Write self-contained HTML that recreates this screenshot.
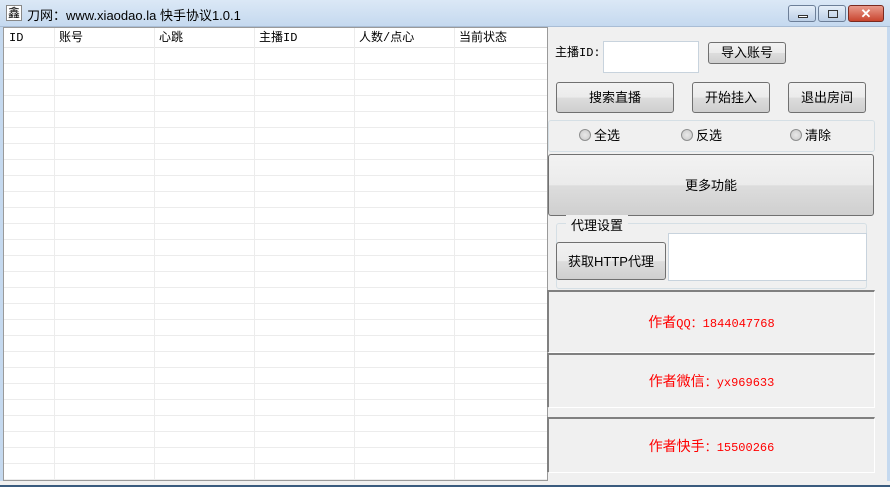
<!DOCTYPE html>
<html><head><meta charset="utf-8"><style>
*{margin:0;padding:0;box-sizing:border-box}
body{width:890px;height:487px;overflow:hidden;background:#f0f0f0;font-family:"Liberation Sans","Noto Sans CJK SC",sans-serif;font-size:12px;color:#000;position:relative}
.a{position:absolute}
#title{left:0;top:0;width:890px;height:27px;background:linear-gradient(#dbe8f6,#c5d9ef);border-bottom:1px solid #a9bdd5}
#frame{left:0;top:27px;width:890px;height:460px;border-left:3px solid #c5d9ef;border-right:3px solid #c5d9ef}
.btn{position:absolute;border:1px solid #707070;border-radius:3px;background:linear-gradient(#f2f2f2 0%,#ebebeb 50%,#dddddd 51%,#cfcfcf 100%);text-align:center;font-size:13px}
.tb{position:absolute;background:#fff;border:1px solid #c8d3dd}
.grp{position:absolute;border:1px solid #d5dfe5;border-radius:3px}
.pan{position:absolute;border-top:2px solid #808080;border-left:2px solid #808080;border-right:1px solid #fff;border-bottom:1px solid #fff;background:#f0f0f0;color:#f00;text-align:center;font-family:"Liberation Mono","Noto Sans CJK SC",monospace;font-size:12px}
.pan b{font-weight:normal;font-family:"Noto Sans CJK SC",sans-serif;font-size:14px}
.rad{position:absolute;font-size:13px}
.rad i{display:inline-block;width:12px;height:12px;border-radius:50%;border:1px solid #8e8f8f;background:radial-gradient(#e8e8e8,#c9c9c9);vertical-align:-1px;margin-right:3px}
</style></head><body>
<div class="a" id="title"></div>
<div class="a" style="left:6px;top:5px;width:16px;height:16px;background:#fff;border:1px solid #888;font-size:12px;line-height:14px;text-align:center">鑫</div>
<div class="a" style="left:27px;top:5px;font-size:13px">刀网：www.xiaodao.la 快手协议1.0.1</div>
<div class="a" style="left:788px;top:5px;width:28px;height:17px;border:1px solid #6d7f98;border-radius:3px;background:linear-gradient(#e5eef8,#bccfe6)"><div class="a" style="left:9px;top:9px;width:10px;height:3px;background:#fff;border:1px solid #333"></div></div>
<div class="a" style="left:818px;top:5px;width:28px;height:17px;border:1px solid #6d7f98;border-radius:3px;background:linear-gradient(#e5eef8,#bccfe6)"><div class="a" style="left:9px;top:4px;width:10px;height:8px;border:1px solid #333"></div></div>
<div class="a" style="left:848px;top:5px;width:36px;height:17px;border:1px solid #7a2a20;border-radius:3px;background:linear-gradient(#e99b8c,#c9452f);color:#fff;font-weight:bold;text-align:center;line-height:15px;font-size:13px">✕</div>
<div class="a" id="frame"></div>
<div class="a" style="left:3px;top:27px;width:545px;height:454px;background:#fff;border:1px solid #9a9a9a;overflow:hidden">
<div class="a" style="left:0;top:0;width:545px;height:20px;border-bottom:1px solid #e5e5e5;font-family:'Liberation Mono','Noto Sans CJK SC',monospace;font-size:12px;line-height:20px">
<span class="a" style="left:5px">ID</span><span class="a" style="left:55px">账号</span><span class="a" style="left:155px">心跳</span><span class="a" style="left:255px">主播ID</span><span class="a" style="left:355px">人数/点心</span><span class="a" style="left:455px">当前状态</span></div>
<div class="a" style="left:0;top:20px;width:545px;height:440px;background:repeating-linear-gradient(#fff 0 15px,#ececec 15px 16px)"></div>
<div class="a" style="left:50px;top:0;width:1px;height:454px;background:#ececec"></div>
<div class="a" style="left:150px;top:0;width:1px;height:454px;background:#ececec"></div>
<div class="a" style="left:250px;top:0;width:1px;height:454px;background:#ececec"></div>
<div class="a" style="left:350px;top:0;width:1px;height:454px;background:#ececec"></div>
<div class="a" style="left:450px;top:0;width:1px;height:454px;background:#ececec"></div>
</div>
<div class="a" style="left:0;top:481px;width:890px;height:6px;background:#f0f0f0;border-bottom:2px solid #3a5b7e"></div>
<div class="a" style="left:555px;top:43px;font-size:12px;font-family:'Liberation Mono','Noto Sans CJK SC',monospace">主播ID:</div>
<div class="tb" style="left:603px;top:41px;width:96px;height:32px"></div>
<div class="btn" style="left:708px;top:42px;width:78px;height:22px;line-height:20px">导入账号</div>
<div class="btn" style="left:556px;top:82px;width:118px;height:31px;line-height:29px">搜索直播</div>
<div class="btn" style="left:692px;top:82px;width:78px;height:31px;line-height:29px">开始挂入</div>
<div class="btn" style="left:788px;top:82px;width:78px;height:31px;line-height:29px">退出房间</div>
<div class="grp" style="left:548px;top:120px;width:327px;height:32px"></div>
<div class="rad" style="left:579px;top:125px"><i></i>全选</div>
<div class="rad" style="left:681px;top:125px"><i></i>反选</div>
<div class="rad" style="left:790px;top:125px"><i></i>清除</div>
<div class="btn" style="left:548px;top:154px;width:326px;height:62px;line-height:62px">更多功能</div>
<div class="grp" style="left:556px;top:223px;width:311px;height:66px"></div>
<div class="a" style="left:566px;top:215px;padding:0 5px;background:#f0f0f0;font-size:13px">代理设置</div>
<div class="btn" style="left:556px;top:242px;width:110px;height:38px;line-height:38px">获取HTTP代理</div>
<div class="tb" style="left:668px;top:233px;width:199px;height:48px"></div>
<div class="pan" style="left:547px;top:290px;width:328px;height:63px;line-height:61px"><b>作者</b>QQ：1844047768</div>
<div class="pan" style="left:547px;top:353px;width:328px;height:55px;line-height:53px"><b>作者微信</b>：yx969633</div>
<div class="pan" style="left:547px;top:417px;width:328px;height:56px;line-height:54px"><b>作者快手</b>：15500266</div>
</body></html>
